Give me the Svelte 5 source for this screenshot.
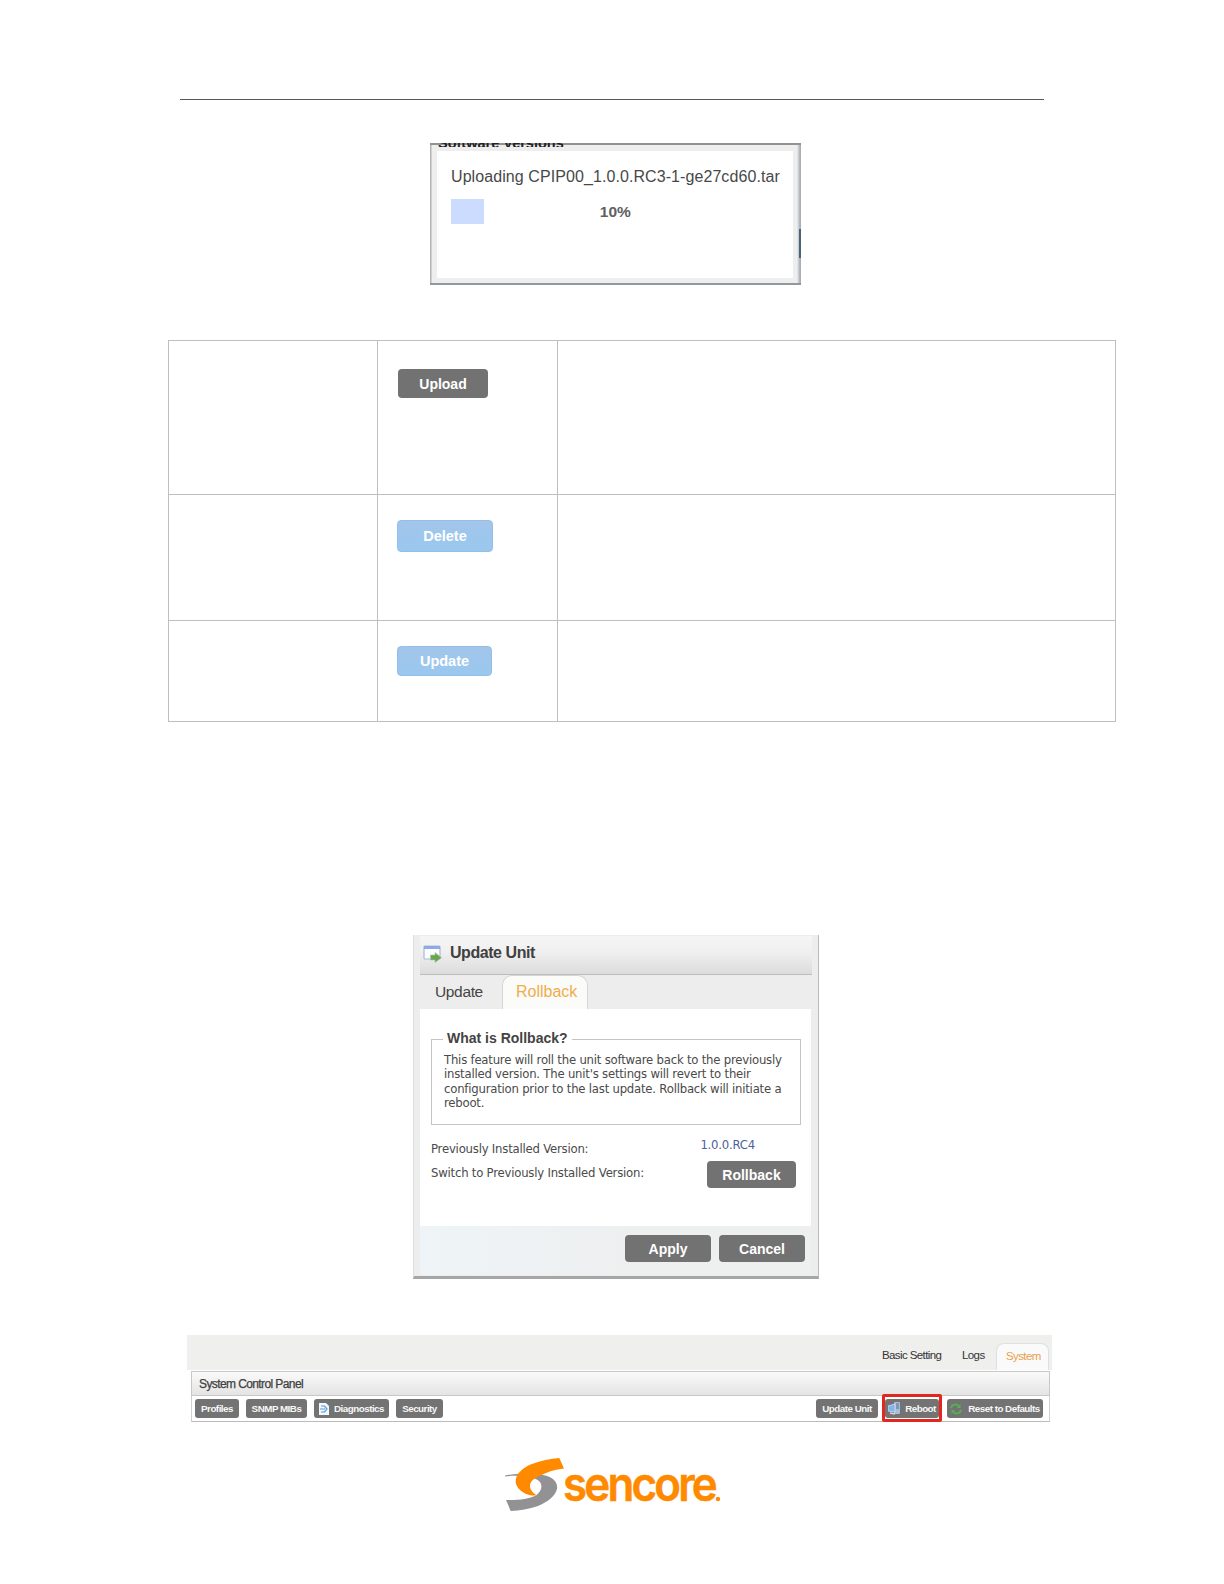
<script>
  const rows = [
    { label: 'Upload', kind: 'upload' },
    { label: 'Delete', kind: 'delete' },
    { label: 'Update', kind: 'update' }
  ];
  const progress = 10;
</script>

<main class="page">
  <hr class="rule" />

  <section class="upload-shot">
    <div class="behind"><span>Software Versions</span></div>
    <div class="upload-card">
      <p class="file">Uploading CPIP00_1.0.0.RC3-1-ge27cd60.tar</p>
      <div class="progress">
        <div class="bar" style="width: {progress}%"></div>
        <b>{progress}%</b>
      </div>
    </div>
  </section>

  <div class="table">
    {#each rows as row}
      <div class="row {row.kind}">
        <div class="cell"></div>
        <div class="cell"><button class="btn {row.kind}-btn">{row.label}</button></div>
        <div class="cell"></div>
      </div>
    {/each}
  </div>

  <section class="dialog">
    <header>
      <svg width="19" height="18" viewBox="0 0 19 18">
        <rect x="1" y="1" width="16" height="13" rx="1" fill="#fafcff" stroke="#a9b8da" stroke-width="1.2" />
        <rect x="1" y="1" width="16" height="3" fill="#8fa9e6" />
        <path d="M7.5 10h4.500V7.500L18.500 12.800l-6.500 4.700v-2.500H7.500z" fill="#6aa452" stroke="#a9c99c" stroke-width=".6" />
      </svg>
      <h2>Update Unit</h2>
    </header>
    <nav>
      <span class="tab">Update</span>
      <span class="tab active">Rollback</span>
    </nav>
    <div class="body">
      <div class="group">
        <h3>What is Rollback?</h3>
        <p>
          This feature will roll the unit software back to the previously<br />
          installed version. The unit's settings will revert to their<br />
          configuration prior to the last update. Rollback will initiate a<br />
          reboot.
        </p>
      </div>
      <div class="line version"><span>Previously Installed Version:</span><b>1.0.0.RC4</b></div>
      <div class="line switch"><span>Switch to Previously Installed Version:</span><button class="btn">Rollback</button></div>
    </div>
    <footer>
      <button class="btn">Apply</button>
      <button class="btn">Cancel</button>
    </footer>
  </section>

  <section class="system">
    <nav>
      <span class="basic">Basic Setting</span>
      <span class="logs">Logs</span>
      <span class="current">System</span>
    </nav>
    <div class="panel">
      <h4>System Control Panel</h4>
      <div class="tools">
        <button class="mini profiles">Profiles</button>
        <button class="mini mibs">SNMP MIBs</button>
        <button class="mini diag">
          <svg width="10" height="12" viewBox="0 0 10 12">
            <path d="M0 0h7l3 3v9H0z" fill="#f2f8ff" />
            <path d="M2 3h3.500l2.500 3-2.500 3H2M1 6h5" fill="none" stroke="#5b95cc" stroke-width="1.200" />
          </svg>
          <span>Diagnostics</span>
        </button>
        <button class="mini security">Security</button>
        <span class="gap"></span>
        <button class="mini unit">Update Unit</button>
        <div class="highlight">
          <button class="mini reboot">
            <svg width="13" height="14" viewBox="0 0 13 14">
              <rect x="6" y="0" width="6" height="12" rx="1" fill="#a9bdd6" />
              <path d="M8 2h3M8 4h3M8 6h3" stroke="#59718e" />
              <path d="M0 4l7-2v8l-7-1z" fill="#86b3ea" stroke="#d3e1f3" stroke-width=".8" />
              <path d="M2 11l5 1" stroke="#cfd9e6" stroke-width="1.4" />
            </svg>
            <span>Reboot</span>
          </button>
        </div>
        <button class="mini reset">
          <svg width="12" height="12" viewBox="0 0 12 12" fill="none" stroke="#55b052" stroke-width="2">
            <path d="M1 5c1-4 6-4.500 8-1.500" />
            <path d="M11 7c-1 4-6 4.500-8 1.500" />
            <path d="M10.500 1v4H6.800zM1.500 11V7h3.700z" fill="#55b052" stroke="none" />
          </svg>
          <span>Reset to Defaults</span>
        </button>
      </div>
    </div>
  </section>

  <svg class="logo" width="220" height="60" viewBox="0 0 220 60">
    <path d="M0 17.500C8 15.500 28 15 38 17C48 19 53 24 52 31C50 39 42 44 33 48C24 51 15 52.500 5.700 53L1 42C12 42.500 24 41 31 37.500C37 33 38 27 34 23C29 19 15 16.500 0 18.500Z" fill="#929294" />
    <path d="M54.300 0L59 10.500C50 11.500 42 14 35 17.700C28 20.500 25 24 25 28C25 32 28 35 32 37.500C23 38.500 13 33 11 26C9 16 19 9 27 6C36 2.500 45 .5 54.300 0Z" fill="#ff8a00" />
    <text x="58" y="42.500" textLength="152" lengthAdjust="spacingAndGlyphs">sencore</text>
    <circle cx="213" cy="41" r="2.200" fill="#ff8a00" />
  </svg>
</main>

<style>
  :global(body) { background: #fff; }
  * { box-sizing: border-box; }
  .page {
    width: 1224px;
    height: 1584px;
    overflow: hidden;
    background: #fff;
    font-family: 'Liberation Sans', Arial, sans-serif;
    color: #444;
  }
  h2, h3, h4, p { margin: 0; }
  button { border: 0; padding: 0; margin: 0; font-family: inherit; }
  svg { flex: none; }
  .rule { width: 864px; height: 1px; margin: 99px 0 0 180px; border: 0; background: #58585a; }

  .upload-shot {
    width: 371px;
    height: 142px;
    margin: 43px 0 0 430px;
    background:
      linear-gradient(#47637c, #47637c) 100% 84px / 2px 29px no-repeat,
      linear-gradient(90deg, #b5b5b5 1px, #eee 2px, #eee 367px, #a9aeb5 370px);
    border-top: 2px solid #929292;
    border-bottom: 2px solid #92979c;
    padding-left: 7px;
  }
  .behind { height: 8px; margin-top: -2px; overflow: hidden; }
  .behind span {
    display: block;
    height: 4px;
    overflow: hidden;
    line-height: 0;
    font-size: 14.500px;
    font-weight: 700;
    color: #222;
    padding-left: 1px;
  }
  .upload-card { width: 356px; height: 127px; background: #fff; padding: 16px 14px 0; }
  .file { font-size: 16px; line-height: 20px; letter-spacing: .08px; white-space: nowrap; color: #484848; }
  .progress { display: flex; width: 328px; height: 25px; margin-top: 12px; align-items: center; }
  .bar { height: 25px; background: #ccdcff; }
  .progress b { margin-left: 116px; font-size: 15.500px; color: #606060; }

  .table { width: 948px; margin: 55px 0 0 168px; border: 1px solid #bfbfbf; border-bottom: 0; }
  .row { display: grid; grid-template-columns: 208px 180px 1fr; border-bottom: 1px solid #bfbfbf; }
  .row.upload { height: 154px; }
  .row.delete { height: 126px; }
  .row.update { height: 101px; }
  .cell + .cell { border-left: 1px solid #bfbfbf; }
  .cell { display: flex; align-items: flex-start; }
  .btn {
    background: #727272;
    color: #fff;
    font-size: 14px;
    font-weight: 700;
    border-radius: 4px;
    width: 86px;
    height: 27px;
    line-height: 28px;
    text-align: center;
  }
  .upload-btn { width: 90px; height: 29px; margin: 28px 0 0 20px; line-height: 30px; }
  .delete-btn, .update-btn {
    background: linear-gradient(#a3c5ea, #99c8ef);
    border: 1px solid #92bfe6;
    width: 96px;
    height: 32px;
    margin: 25px 0 0 19px;
    font-size: 14.500px;
    line-height: 29px;
  }
  .update-btn { width: 95px; height: 30px; line-height: 27px; }

  .dialog {
    width: 406px;
    height: 344px;
    margin: 213px 0 0 413px;
    padding: 1px 7px 0 6px;
    background: #ededed;
    border-right: 1px solid #bbb;
    border-left: 1px solid #ddd;
    border-bottom: 3px solid #a5a6a6;
  }
  .dialog header {
    display: flex;
    align-items: center;
    height: 39px;
    margin-right: -1px;
    padding: 0 0 2px 3px;
    gap: 8px;
    background: linear-gradient(#f5f5f5, #f0f0f0 40%, #dcdcdc);
    border-bottom: 1px solid #bdbdbd;
  }
  h2 { margin-top: -2px; font-size: 16px; letter-spacing: -.45px; color: #404040; }
  .dialog nav { display: flex; height: 34px; color: #444; font-size: 15.500px; letter-spacing: -.35px; line-height: 34px; }
  .tab { width: 82px; padding-left: 15px; }
  .tab.active {
    width: 86px;
    padding-left: 13px;
    background: #fbfbfa;
    border: 1px solid #d5d5d5;
    border-bottom: 0;
    border-radius: 10px 10px 0 0;
    color: #f0ad4a;
    font-size: 16px;
    letter-spacing: 0;
    line-height: 32px;
  }
  .body { height: 217px; background: #fff; padding: 30px 11px 0; }
  .group { width: 370px; height: 86px; border: 1px solid #c4c4c4; padding-left: 12px; }
  h3 { display: block; width: max-content; margin: -10px 0 0 -1px; padding: 0 4px; background: #fff; font-size: 14px; line-height: 17px; color: #444; }
  .group p, .line { font-family: 'DejaVu Sans', Verdana, sans-serif; font-size: 11.700px; letter-spacing: -.22px; line-height: 14.300px; color: #4a4a4a; white-space: nowrap; }
  .group p { margin-top: 6px; }
  .line { display: flex; justify-content: space-between; }
  .version { margin-top: 12px; height: 24px; padding-right: 45px; align-items: flex-start; }
  .version span { padding-top: 5px; }
  .version b { padding-top: 1px; font-weight: 400; color: #4c6299; }
  .switch span { padding-top: 5px; }
  .switch .btn { width: 89px; margin-right: 4px; font-family: 'Liberation Sans', sans-serif; letter-spacing: 0; }
  .dialog footer { display: flex; justify-content: flex-end; gap: 8px; height: 49px; padding-top: 9px; padding-right: 6px; background: linear-gradient(90deg, #eef4f7, #eeefef 60%); }

  .system { width: 865px; height: 89px; margin: 56px 0 0 187px; background: #efefee; }
  .system nav { display: flex; justify-content: flex-end; height: 35px; padding-right: 3px; font-size: 11.500px; letter-spacing: -.6px; line-height: 41px; color: #333; white-space: nowrap; }
  .basic { width: 80px; }
  .logs { width: 34px; }
  .current { width: 53px; height: 27px; margin-top: 8px; padding-left: 9px; line-height: 24px; background: #fafafa; border-radius: 8px 8px 0 0; border: 1px solid #e0e0e0; border-bottom: 0; color: #e9a04d; }
  .panel { height: 54px; background: #fff; padding: 1px 2px 0 4px; }
  .panel h4 { height: 25px; border: 1px solid #c8c8c8; padding-left: 7px; line-height: 24px; font-size: 12px; letter-spacing: -.6px; color: #404040; font-weight: 400; background: linear-gradient(#fafafa, #e4e4e4); -webkit-text-stroke: .25px #404040; }
  .tools { display: flex; height: 26px; border: 1px solid #d0d0d0; border-top: 0; border-bottom-color: #bbb; padding: 3px 6px 0 3px; }
  .mini { display: flex; align-items: center; justify-content: center; height: 19px; border-radius: 3px; background: #737373; color: #f7f7f7; font-size: 9.800px; font-weight: 700; letter-spacing: -.5px; line-height: 19px; white-space: nowrap; }
  .profiles { width: 44px; }
  .mibs { width: 61px; margin-left: 7px; }
  .diag { width: 75px; margin-left: 7px; gap: 5px; }
  .security { width: 47px; margin-left: 7px; }
  .gap { flex: 1; }
  .unit { width: 62px; }
  .highlight { width: 60px; height: 28px; margin: -5px 5px 0 4px; border: 3px solid #e3271f; border-radius: 2px; padding-top: 2px; }
  .reboot { width: 54px; gap: 4px; }
  .reset { width: 96px; gap: 6px; }
  .logo { display: block; overflow: visible; margin: 34px 0 0 505px; }
  .logo text { font-family: Inter, sans-serif; font-weight: 600; font-size: 47px; letter-spacing: -3px; fill: #ff8a00; stroke: #ff8a00; stroke-width: .5px; }
</style>
